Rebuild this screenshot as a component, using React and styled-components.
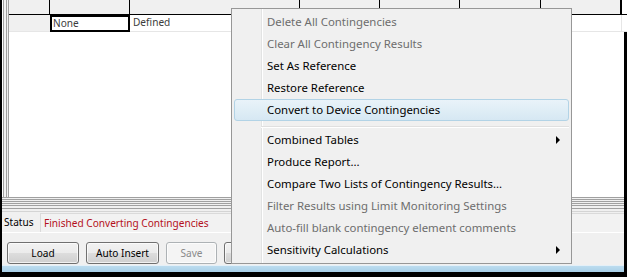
import React from 'react';
import styled, { createGlobalStyle } from 'styled-components';

const GlobalStyle = createGlobalStyle`
  html, body {
    margin: 0;
    padding: 0;
    background: #000;
  }
  * {
    box-sizing: border-box;
  }
`;

const Screen = styled.div`
  position: relative;
  width: 627px;
  height: 277px;
  background: #000;
  padding: 0 3px 5px 2px;
  font-family: 'Noto Sans', 'Open Sans', sans-serif;
  font-size: 10.1px;
  overflow: hidden;
`;

const Frame = styled.div`
  height: 272px;
  background: #f0f0f0;
  display: flex;
  flex-direction: column;
`;

const GridPanel = styled.div`
  height: 198px;
  padding-left: 7px;
  border-bottom: 1px solid #a0a0a0;
  background:
    linear-gradient(
        to right,
        transparent 1px,
        #a0a0a0 1px 2px,
        #f0f0f0 2px 4px,
        #a0a0a0 4px 5px,
        #f0f0f0 5px 6px,
        #a0a0a0 6px 7px,
        transparent 7px
      )
      no-repeat left top / 7px 100%,
    #fff;
`;

const Grid = styled.div`
  display: grid;
  grid-template-columns: 41px 80px 170px 80px 80px 81px 81px 1fr;
`;

const HeadCell = styled.div`
  height: 15px;
  border-bottom: 1px solid #000;
  border-right: ${(p) => (p.$last ? '2px solid #000' : p.$open ? 'none' : '1px solid #000')};
  background: ${(p) => (p.$open ? '#fff' : '#f0f0f0')};
`;

const Cell = styled.div`
  height: 17px;
  padding: 0 3px;
  line-height: 15px;
  color: #3c3c3c;
  white-space: nowrap;
  border-bottom: 1px solid #e6e6e6;
  background: ${(p) => (p.$head ? '#f0f0f0' : '#fff')};
  border-right: ${(p) => (p.$edge ? '1px solid #e6e6e6' : 'none')};
  ${(p) =>
    p.$selected &&
    `
    border: 2px solid #000;
    line-height: 13px;
    padding-left: 1px;
  `}
`;

const Splitter = styled.div`
  height: 14px;
  background: linear-gradient(
    to bottom,
    #f0f0f0 0 1px,
    #a0a0a0 1px 2px,
    #f0f0f0 2px 3px,
    #a0a0a0 3px 4px,
    #f0f0f0 4px 5px,
    #a0a0a0 5px 6px,
    #f0f0f0 6px 7px,
    #a0a0a0 7px 8px,
    #f0f0f0 8px 10px,
    #a0a0a0 10px 11px,
    #f0f0f0 11px 13px,
    #d4d4d4 13px 14px
  );
`;

const StatusRow = styled.div`
  height: 21px;
  display: flex;
  align-items: center;
  padding-left: 2px;
  border-bottom: 1px solid #fff;
`;

const StatusLabel = styled.span`
  width: 36px;
  color: #000;
`;

const StatusBox = styled.div`
  flex: 1;
  height: 19px;
  line-height: 18px;
  padding-left: 3px;
  color: #b4101c;
  background: #f2f2f2;
  border-left: 1px solid #dadada;
  border-top: 1px solid #dadada;
  white-space: nowrap;
`;

const ButtonBar = styled.div`
  display: flex;
  gap: 7px;
  padding: 0 0 0 5px;
  margin-top: 9px;
  height: 22px;
`;

const Button = styled.div`
  width: ${(p) => p.$w}px;
  height: 22px;
  border-radius: 3px;
  display: flex;
  align-items: center;
  justify-content: center;
  border: 1px solid ${(p) => (p.$disabled ? '#adb2b5' : '#707070')};
  color: ${(p) => (p.$disabled ? '#8a8a8a' : '#000')};
  background: ${(p) =>
    p.$disabled
      ? '#f4f4f4'
      : 'linear-gradient(to bottom, #f2f2f2 0%, #ebebeb 50%, #dddddd 50%, #cfcfcf 100%)'};
  box-shadow: inset 0 0 0 1px rgba(255, 255, 255, 0.7);
`;

const GlassStrip = styled.div`
  margin-top: auto;
  height: 7px;
  border-top: 1px solid #e4f0f8;
  background: linear-gradient(to bottom, #bcdcef, #a9d0e8);
`;

const Menu = styled.div`
  position: absolute;
  left: 231px;
  top: 8px;
  width: 341px;
  padding: 2px;
  border: 1px solid #979797;
  font-size: 11.4px;
  background:
    linear-gradient(
        to right,
        transparent 29px,
        #e2e3e3 29px 30px,
        #fff 30px 31px,
        transparent 31px
      ),
    #f0f0f0;
`;

const Item = styled.div`
  position: relative;
  height: 22px;
  line-height: 19px;
  padding-left: 32px;
  border: 1px solid transparent;
  border-radius: 3px;
  color: ${(p) => (p.$disabled ? '#6d6d6d' : '#000')};
  white-space: nowrap;
  ${(p) =>
    p.$active &&
    `
    border-color: #b2d3e6;
    background: linear-gradient(to bottom, #e9f3f9, #d6e8f3);
  `}
`;

const Arrow = styled.span`
  position: absolute;
  right: 8px;
  top: 6px;
  width: 0;
  height: 0;
  border-left: 4px solid #000;
  border-top: 4px solid transparent;
  border-bottom: 4px solid transparent;
`;

const Separator = styled.div`
  height: 8px;
  padding-top: 5px;
  margin-left: 27px;
  &::after {
    content: '';
    display: block;
    height: 1px;
    background: #e0e0e0;
    border-bottom: 1px solid #fff;
    box-sizing: content-box;
  }
`;

const menuItems = [
  { label: 'Delete All Contingencies', disabled: true },
  { label: 'Clear All Contingency Results', disabled: true },
  { label: 'Set As Reference' },
  { label: 'Restore Reference' },
  { label: 'Convert to Device Contingencies', active: true },
  { separator: true },
  { label: 'Combined Tables', sub: true },
  { label: 'Produce Report...' },
  { label: 'Compare Two Lists of Contingency Results...' },
  { label: 'Filter Results using Limit Monitoring Settings', disabled: true },
  { label: 'Auto-fill blank contingency element comments', disabled: true },
  { label: 'Sensitivity Calculations', sub: true },
];

export default function App() {
  return (
    <>
      <GlobalStyle />
      <Screen>
        <Frame>
          <GridPanel>
            <Grid>
              <HeadCell />
              <HeadCell />
              <HeadCell />
              <HeadCell />
              <HeadCell />
              <HeadCell />
              <HeadCell $last />
              <HeadCell $open />
              <Cell $head />
              <Cell $selected>None</Cell>
              <Cell>Defined</Cell>
              <Cell />
              <Cell />
              <Cell />
              <Cell $edge />
              <Cell />
            </Grid>
          </GridPanel>
          <Splitter />
          <StatusRow>
            <StatusLabel>Status</StatusLabel>
            <StatusBox>Finished Converting Contingencies</StatusBox>
          </StatusRow>
          <ButtonBar>
            <Button $w={72}>Load</Button>
            <Button $w={73}>Auto Insert</Button>
            <Button $w={51} $disabled>
              Save
            </Button>
            <Button $w={72} />
          </ButtonBar>
          <GlassStrip />
        </Frame>
        <Menu>
          {menuItems.map((m, i) =>
            m.separator ? (
              <Separator key={i} />
            ) : (
              <Item key={i} $disabled={m.disabled} $active={m.active}>
                {m.label}
                {m.sub && <Arrow />}
              </Item>
            )
          )}
        </Menu>
      </Screen>
    </>
  );
}
